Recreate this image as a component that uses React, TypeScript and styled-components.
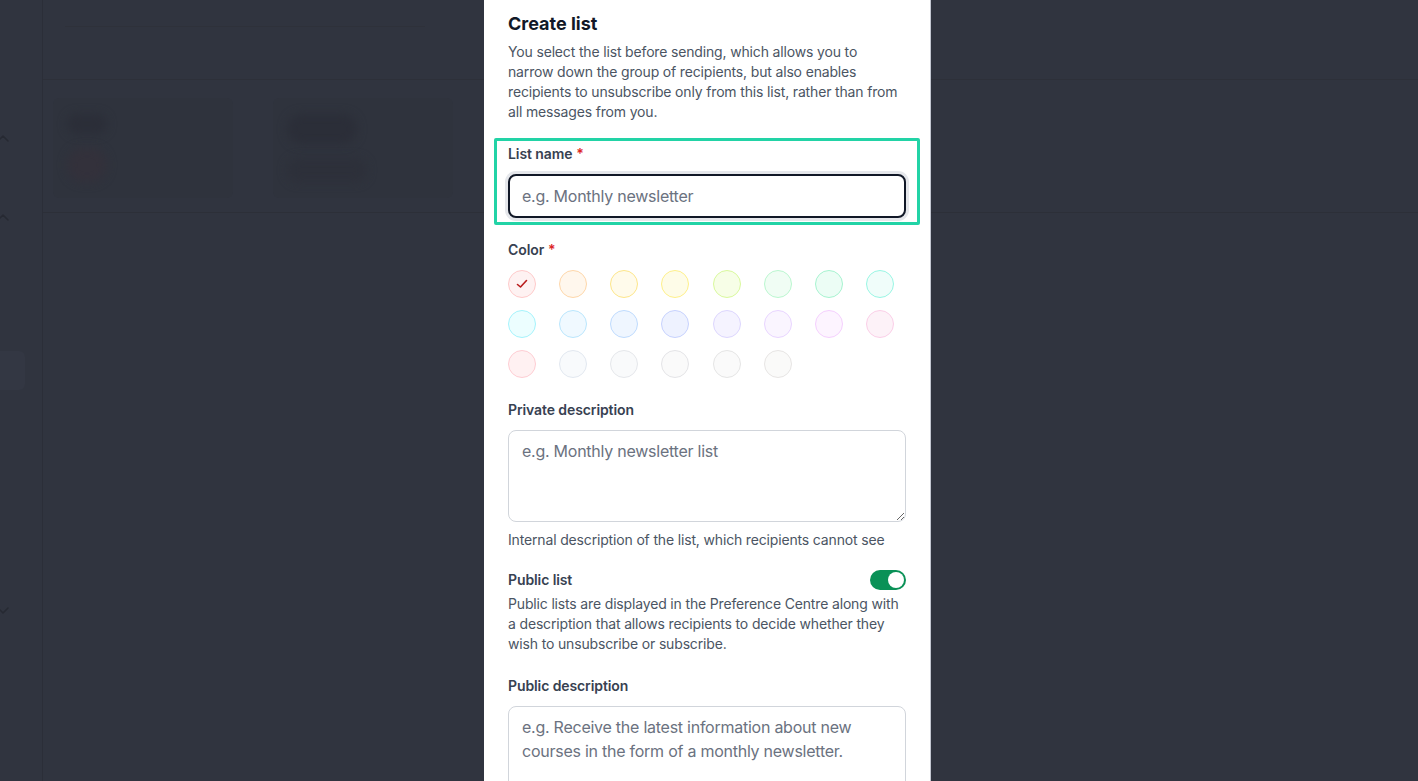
import React from "react";
import styled, { createGlobalStyle } from "styled-components";

const Global = createGlobalStyle`
  * { box-sizing: border-box; }
  html, body { margin: 0; padding: 0; height: 100%; overflow: hidden; }
  body { font-family: Inter, "Noto Sans", "Liberation Sans", sans-serif; background: #30343f; }
`;

const Page = styled.div`
  position: relative;
  width: 100vw;
  height: 100vh;
  overflow: hidden;
  background: #30343f;
`;

/* ---------- dimmed application behind the dialog ---------- */
const AppShell = styled.div`
  display: flex;
  height: 100%;
`;

const Sidebar = styled.aside`
  width: 43px;
  flex-shrink: 0;
  border-right: 1px solid #2b2e38;
  display: flex;
  flex-direction: column;
  padding-top: 131px;
`;

const SideChevron = styled.div<{ $mt: number }>`
  margin-top: ${(p) => p.$mt}px;
  margin-left: -3px;
  height: 14px;
  display: flex;
  align-items: center;
  color: #262932;
`;

const SideItem = styled.div`
  margin-top: 127px;
  width: 25px;
  height: 39px;
  border-radius: 0 6px 6px 0;
  background: #333743;
`;

const Main = styled.main`
  flex: 1;
  display: flex;
  flex-direction: column;
`;

const TopBar = styled.div`
  height: 27px;
  margin-left: 22px;
  width: 360px;
  border-bottom: 1px solid #2e313a;
`;

const SubBar = styled.div`
  height: 53px;
  border-bottom: 1px solid #2d3039;
`;

const CardRow = styled.div`
  height: 133px;
  border-bottom: 1px solid #2c2f38;
  display: flex;
  gap: 40px;
  padding: 18px 10px 0;
`;

const GhostCard = styled.div<{ $w: number }>`
  width: ${(p) => p.$w}px;
  height: 100px;
  border-radius: 6px;
  background: #2f333d;
  display: flex;
  flex-direction: column;
  gap: 14px;
  padding: 16px 14px;
`;

const GhostBlob = styled.div<{ $w: number; $h: number; $c: string }>`
  width: ${(p) => p.$w}px;
  height: ${(p) => p.$h}px;
  border-radius: 999px;
  background: ${(p) => p.$c};
  filter: blur(5px);
`;

/* ---------- dialog ---------- */
const Overlay = styled.div`
  position: absolute;
  inset: 0;
  display: flex;
  justify-content: center;
  padding-right: 3px;
`;

const Modal = styled.section`
  width: 447px;
  height: 100%;
  background: #ffffff;
  border-right: 1px solid #c3c7d1;
  padding: 12px 24px 0 24px;
  overflow: hidden;
  display: flex;
  flex-direction: column;
`;

const Title = styled.h2`
  margin: 0;
  font-size: 18px;
  line-height: 24px;
  font-weight: 700;
  color: #111827;
`;

const Lead = styled.p`
  margin: 6px 0 0;
  font-size: 14px;
  line-height: 20px;
  letter-spacing: -0.16px;
  color: #4b5563;
`;

const Form = styled.div`
  display: flex;
  flex-direction: column;
  gap: 22px;
  margin-top: 22px;
`;

const Field = styled.div`
  position: relative;
  display: flex;
  flex-direction: column;
`;

const Label = styled.label`
  font-size: 14px;
  line-height: 20px;
  font-weight: 600;
  letter-spacing: -0.1px;
  color: #374151;
  margin-bottom: 10px;
`;

const Req = styled.span`
  color: #dc2626;
  margin-left: 4px;
`;

const Highlight = styled.div`
  position: absolute;
  left: -14px;
  right: -14px;
  top: -6px;
  bottom: -7px;
  border: 3px solid #22d3a6;
  border-radius: 2px;
  pointer-events: none;
`;

const TextInput = styled.input`
  height: 44px;
  width: 100%;
  border: 2px solid #111827;
  border-radius: 8px;
  box-shadow: 0 0 0 3px #e5e7eb;
  padding: 0 12px;
  font-family: inherit;
  font-size: 16px;
  letter-spacing: -0.25px;
  color: #111827;
  outline: none;
  caret-color: #111827;
  &::placeholder { color: #6b7280; }
`;

const Swatches = styled.div`
  display: grid;
  grid-template-columns: repeat(8, 28px);
  column-gap: 23.15px;
  row-gap: 12px;
`;

const Swatch = styled.button<{ $bg: string; $bd: string }>`
  width: 28px;
  height: 28px;
  border-radius: 50%;
  padding: 0;
  background: ${(p) => p.$bg};
  border: 1px solid ${(p) => p.$bd};
  display: flex;
  align-items: center;
  justify-content: center;
  cursor: pointer;
`;

const TextArea = styled.textarea<{ $h: number }>`
  height: ${(p) => p.$h}px;
  width: 100%;
  border: 1px solid #d1d5db;
  border-radius: 8px;
  padding: 8px 13px;
  font-family: inherit;
  font-size: 16px;
  line-height: 24px;
  letter-spacing: -0.25px;
  color: #111827;
  resize: vertical;
  outline: none;
  &::placeholder { color: #6b7280; }
`;

const Help = styled.p`
  margin: 8px 0 0;
  font-size: 14px;
  line-height: 20px;
  letter-spacing: -0.16px;
  color: #4b5563;
`;

const ToggleRow = styled.div`
  display: flex;
  align-items: center;
  justify-content: space-between;
  height: 20px;
  margin-top: -2px;
`;

const ToggleLabel = styled.span`
  font-size: 14px;
  line-height: 20px;
  font-weight: 600;
  letter-spacing: -0.1px;
  color: #374151;
`;

const Toggle = styled.button<{ $on: boolean }>`
  width: 36px;
  height: 20px;
  border-radius: 999px;
  border: none;
  padding: 2px;
  background: ${(p) => (p.$on ? "#0a9157" : "#d1d5db")};
  display: flex;
  justify-content: ${(p) => (p.$on ? "flex-end" : "flex-start")};
  cursor: pointer;
`;

const Knob = styled.span`
  width: 16px;
  height: 16px;
  border-radius: 50%;
  background: #ffffff;
`;

const ToggleDesc = styled.p`
  margin: 4px 0 0;
  font-size: 14px;
  line-height: 20px;
  letter-spacing: -0.16px;
  color: #4b5563;
`;

const swatches: [string, string][] = [
  ["#fef2f2", "#fecaca"],
  ["#fff7ed", "#fed7aa"],
  ["#fffbeb", "#fde68a"],
  ["#fefce8", "#fef08a"],
  ["#f7fee7", "#d9f99d"],
  ["#f0fdf4", "#bbf7d0"],
  ["#ecfdf5", "#a7f3d0"],
  ["#f0fdfa", "#99f6e4"],
  ["#ecfeff", "#a5f3fc"],
  ["#f0f9ff", "#bae6fd"],
  ["#eff6ff", "#bfdbfe"],
  ["#eef2ff", "#c7d2fe"],
  ["#f5f3ff", "#ddd6fe"],
  ["#faf5ff", "#e9d5ff"],
  ["#fdf4ff", "#f5d0fe"],
  ["#fdf2f8", "#fbcfe8"],
  ["#fff1f2", "#fecdd3"],
  ["#f8fafc", "#e2e8f0"],
  ["#f9fafb", "#e5e7eb"],
  ["#fafafa", "#e4e4e7"],
  ["#fafafa", "#e5e5e5"],
  ["#fafaf9", "#e7e5e4"],
];

const Chevron = ({ up }: { up: boolean }) => (
  <svg width="12" height="8" viewBox="0 0 12 8" fill="none">
    <path
      d={up ? "M1 7 L6 2 L11 7" : "M1 1 L6 6 L11 1"}
      stroke="currentColor"
      strokeWidth="1.5"
      strokeLinecap="round"
      strokeLinejoin="round"
    />
  </svg>
);

const Check = () => (
  <svg width="14" height="14" viewBox="0 0 14 14" fill="none">
    <path d="M2.5 7.5 L5.5 10 L11.5 3.5" stroke="#b91c1c" strokeWidth="1.6" strokeLinecap="round" strokeLinejoin="round" />
  </svg>
);

export default function App() {
  return (
    <Page>
      <Global />
      <AppShell>
        <Sidebar>
          <SideChevron $mt={0}><Chevron up /></SideChevron>
          <SideChevron $mt={65}><Chevron up /></SideChevron>
          <SideItem />
          <SideChevron $mt={214}><Chevron up={false} /></SideChevron>
        </Sidebar>
        <Main>
          <TopBar />
          <SubBar />
          <CardRow>
            <GhostCard $w={180}>
              <GhostBlob $w={40} $h={24} $c="#2b2e38" />
              <GhostBlob $w={40} $h={40} $c="#33313b" />
            </GhostCard>
            <GhostCard $w={180}>
              <GhostBlob $w={70} $h={30} $c="#2b2e38" />
              <GhostBlob $w={80} $h={24} $c="#2d303a" />
            </GhostCard>
          </CardRow>
        </Main>
      </AppShell>
      <Overlay>
        <Modal>
          <Title>Create list</Title>
          <Lead>
            You select the list before sending, which allows you to narrow down the group of recipients, but also enables
            recipients to unsubscribe only from this list, rather than from all messages from you.
          </Lead>
          <Form>
            <Field>
              <Label>
                List name<Req>*</Req>
              </Label>
              <TextInput placeholder="e.g. Monthly newsletter" autoFocus />
              <Highlight />
            </Field>
            <Field>
              <Label>
                Color<Req>*</Req>
              </Label>
              <Swatches>
                {swatches.map(([bg, bd], i) => (
                  <Swatch key={i} $bg={bg} $bd={bd} aria-label={`color ${i + 1}`}>
                    {i === 0 && <Check />}
                  </Swatch>
                ))}
              </Swatches>
            </Field>
            <Field>
              <Label>Private description</Label>
              <TextArea $h={92} placeholder="e.g. Monthly newsletter list" />
              <Help>Internal description of the list, which recipients cannot see</Help>
            </Field>
            <Field>
              <ToggleRow>
                <ToggleLabel>Public list</ToggleLabel>
                <Toggle $on aria-label="Public list">
                  <Knob />
                </Toggle>
              </ToggleRow>
              <ToggleDesc>
                Public lists are displayed in the Preference Centre along with a description that allows recipients to
                decide whether they wish to unsubscribe or subscribe.
              </ToggleDesc>
            </Field>
            <Field>
              <Label>Public description</Label>
              <TextArea
                $h={120}
                placeholder="e.g. Receive the latest information about new courses in the form of a monthly newsletter."
              />
            </Field>
          </Form>
        </Modal>
      </Overlay>
    </Page>
  );
}
